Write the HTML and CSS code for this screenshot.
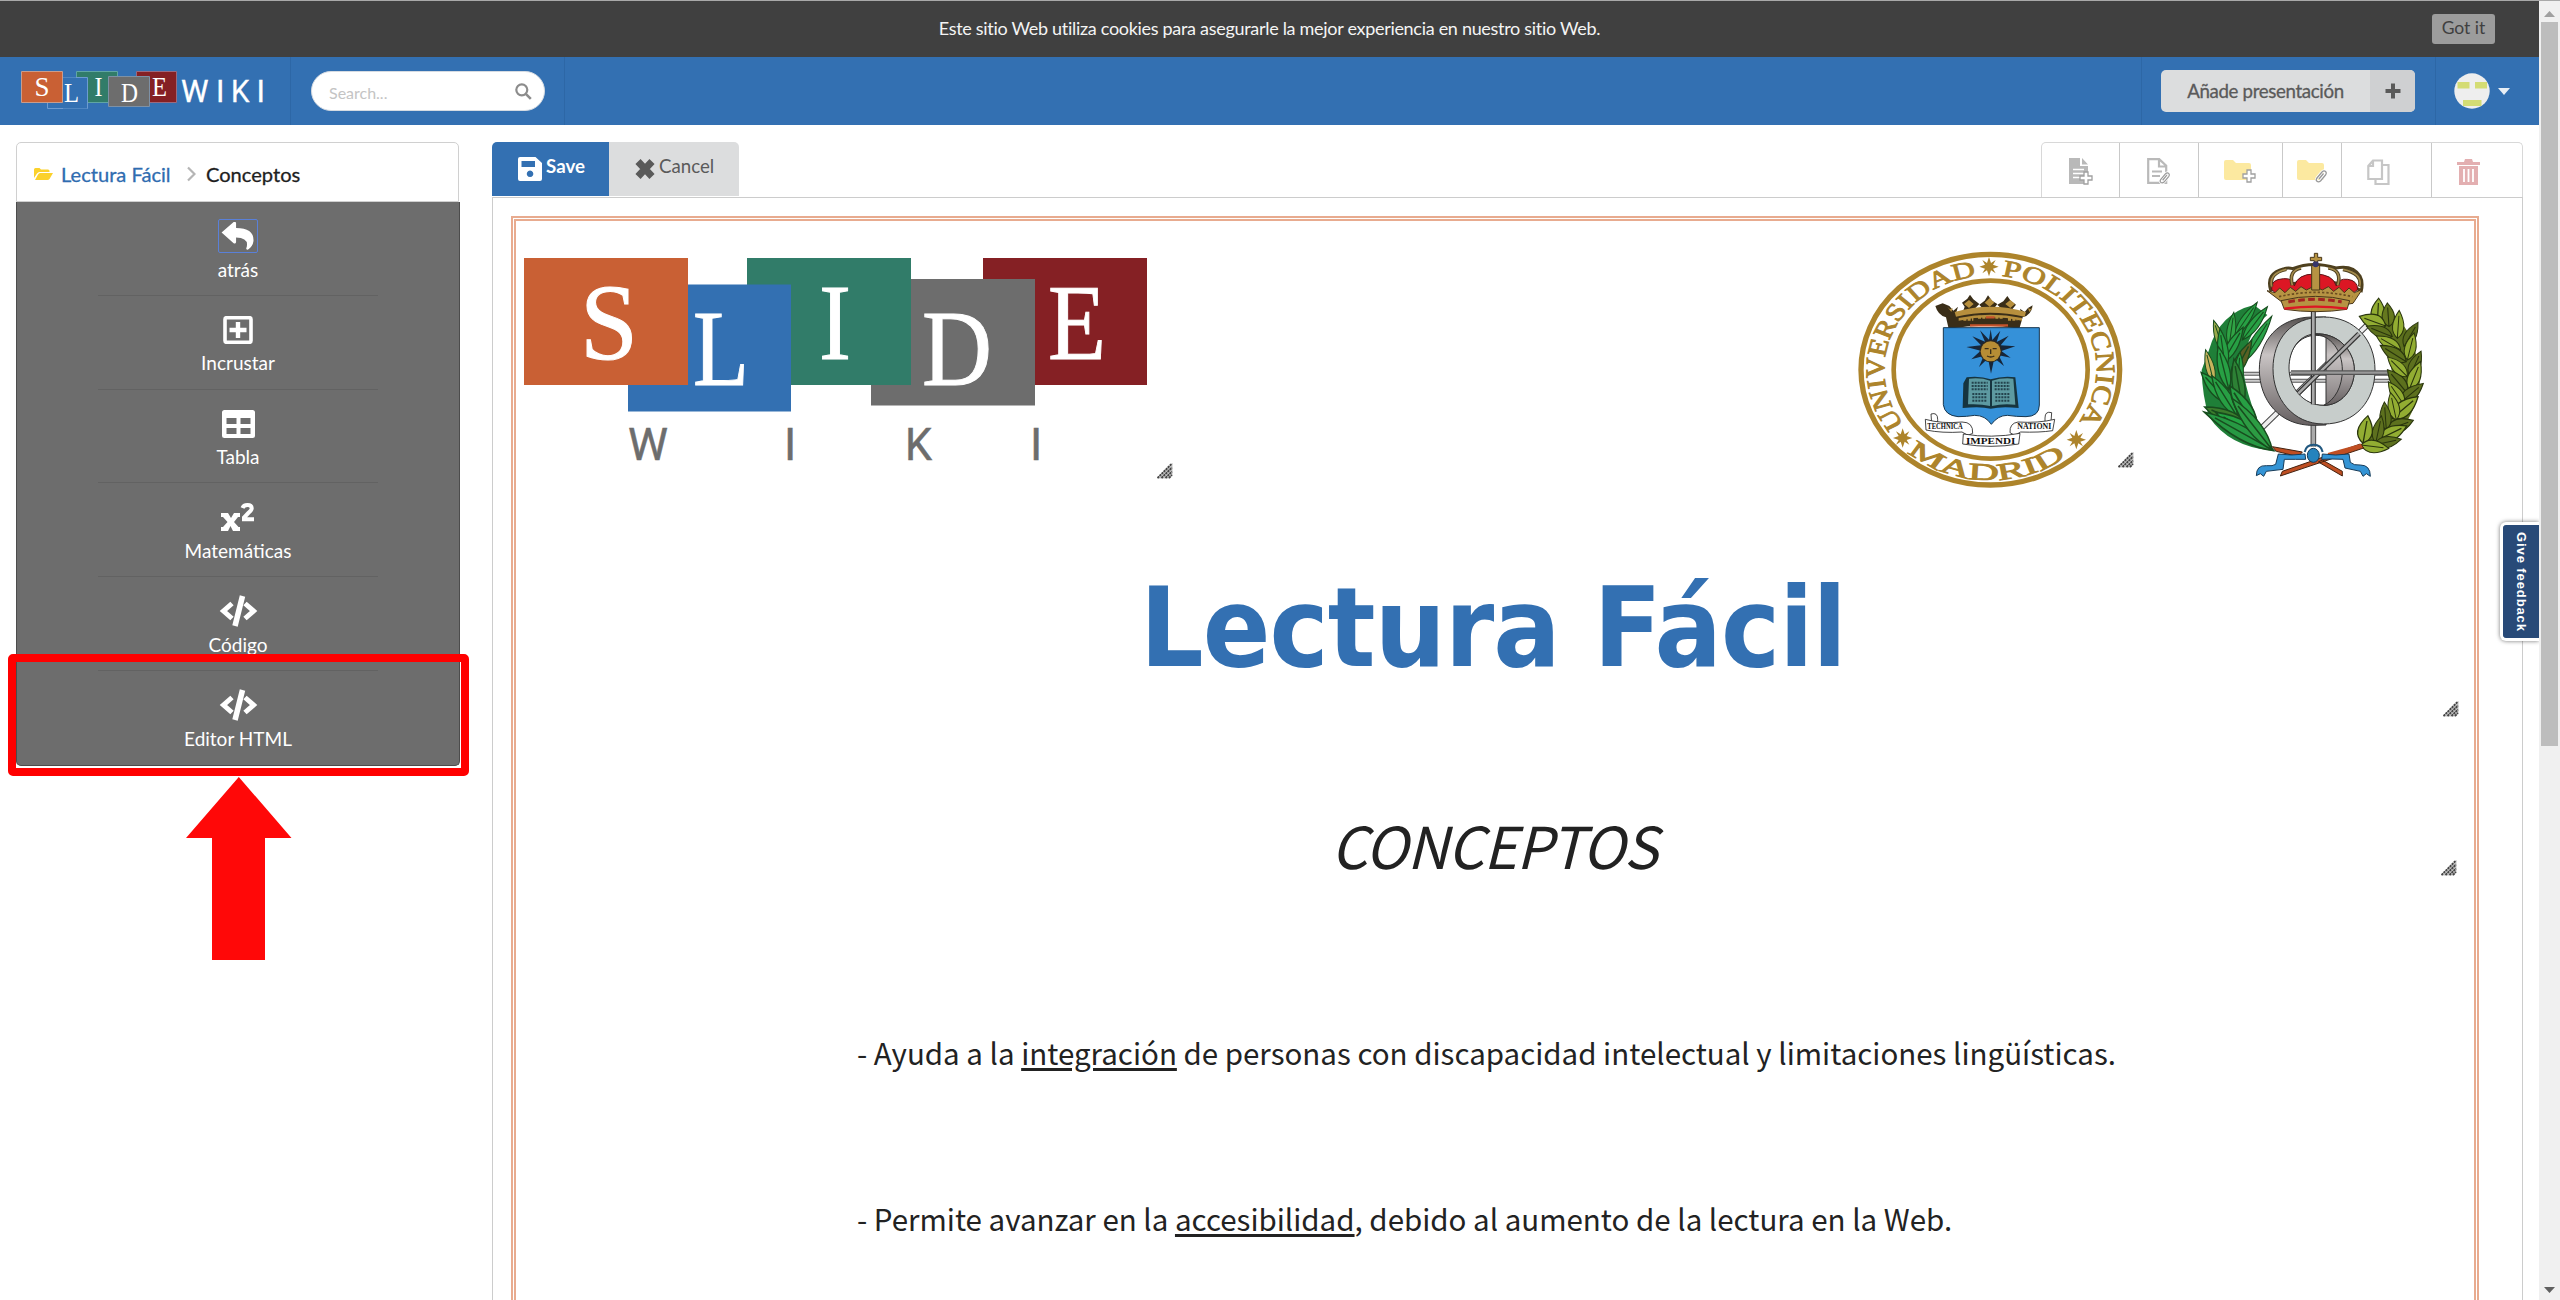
FILE: index.html
```html
<!DOCTYPE html>
<html lang="es">
<head>
<meta charset="utf-8">
<title>SlideWiki - Lectura Fácil</title>
<link rel="stylesheet" href="styles.css">
</head>
<body>
<svg width="0" height="0" class="defs">
  <defs>
    <symbol id="grip" viewBox="0 0 16 16"><path d="M0 15.500 15.500 0V12L12 15.500Z" fill="#c4c4c4"/><path d="M.5 15 15 .5M4.500 15 15 4.500M8.500 15 15 8.500M12 15l3-3" stroke="#444" stroke-width="1.900" stroke-dasharray="2.200 .7"/></symbol>
    <symbol id="code" viewBox="0 0 41 32"><path d="M27 9l8.500 7.500L27 24M14 9l-8.500 7.500L14 24" transform="translate(0 -.5)" fill="none" stroke="#fff" stroke-width="5"/><path d="M24.500 1 17 31" stroke="#fff" stroke-width="5.500"/></symbol>
    <symbol id="clip" viewBox="0 0 12 14"><path d="M2 9l5-6q2-2 3.500-.5t0 3.500L5.500 12q-2 1.500-3.500.3T2 9M4 10l4.500-5.500" fill="none" stroke="#fff" stroke-width="3"/><path d="M2 9l5-6q2-2 3.500-.5t0 3.500L5.500 12q-2 1.500-3.500.3T2 9M4 10l4.500-5.500" fill="none" stroke="#999" stroke-width="1.300"/></symbol>
    <symbol id="plus" viewBox="0 0 14 14"><path d="M5 1h4v4h4v4H9v4H5V9H1V5h4z" fill="#fff" stroke="#a0a0a0" stroke-width="1.300"/></symbol>
  </defs>
</svg>
<div class="page">
  <div class="cookie">
    <span class="cookie-text">Este sitio Web utiliza cookies para asegurarle la mejor experiencia en nuestro sitio Web.</span>
    <button class="cookie-btn">Got it</button>
  </div>
  <header class="nav">
    <div class="nav-logo">
      <svg width="248" height="40" viewBox="20 70 248 40" font-family="Liberation Serif, serif" fill="#fff">
        <g stroke="#9bb0cc" stroke-width="1">
          <path d="M47.500 77.500h40v31h-40z" fill="#3370b2" stroke="#6d9bd0"/>
          <path d="M76.500 71.500h41v31h-41z" fill="#317c69" stroke="#60a5a4"/>
          <path d="M136.500 71.500h40v31h-40z" fill="#852024" stroke="#9a6a80"/>
          <path d="M108.500 76.500h41v30h-41z" fill="#6d6d6d" stroke="#7d91a6"/>
          <path d="M63 77.500h24.500v31H63z" fill="#3370b2" stroke="none"/>
          <path d="M76 77.500h11.500v31" fill="none" stroke="#6d9bd0"/>
          <path d="M21.500 71.500h41v31h-41z" fill="#c96034" stroke="#c99c8c"/>
        </g>
        <g font-size="27"><text x="34.500" y="96">S</text><text x="64" y="102" textLength="15" lengthAdjust="spacingAndGlyphs">L</text><text x="94.500" y="96" textLength="8" lengthAdjust="spacingAndGlyphs">I</text><text x="121" y="102" textLength="17" lengthAdjust="spacingAndGlyphs">D</text><text x="152" y="96" textLength="15" lengthAdjust="spacingAndGlyphs">E</text></g>
        <g font-size="31" font-family="Roboto, sans-serif" font-weight="400" stroke="#fff" stroke-width=".3"><text x="181" y="101.700">W</text><text x="216" y="101.700">I</text><text x="231" y="101.700" textLength="18.500" lengthAdjust="spacingAndGlyphs">K</text><text x="256.500" y="101.700">I</text></g>
      </svg>
    </div>
    <div class="nav-search">
      <div class="search"><span>Search...</span>
        <svg width="17" height="17" viewBox="0 0 17 17" fill="none" stroke="#8c8c8c"><circle cx="6.800" cy="6.800" r="5.500" stroke-width="2.200"/><path d="M10.800 10.800l5 5" stroke-width="2.600"/></svg>
      </div>
    </div>
    <div class="nav-space"></div>
    <div class="nav-add"><div class="add"><span class="add-label">Añade presentación</span><span class="add-icon"><svg width="16" height="16" viewBox="0 0 16 16"><path d="M6 .500h4V6h5.500v4H10v5.500H6V10H.5V6H6z" fill="#5a5a5a"/></svg></span></div></div>
    <div class="nav-user">
      <svg width="36" height="36" viewBox="0 0 36 36"><circle cx="18" cy="18" r="17.700" fill="#eee"/><path d="M3.500 9h12v6.500h-12zM21 9h12v6.500H21zM9 27h18.500v6H9z" fill="#d4dc74"/></svg>
      <svg width="12" height="7" viewBox="0 0 12 7"><path d="M0 0h12L6 7z" fill="#e8eef5"/></svg>
    </div>
  </header>
  <div class="main">
    <aside class="side">
      <div class="crumbs">
        <svg width="19" height="12" viewBox="0 0 19 12"><path d="M0 10V1.500Q0 0 1.500 0h4L7 1.500h7q1.500 0 1.500 1.500v1H5.500Q4 4 3 5.500z" fill="#fbd12b"/><path d="M1 12 4 6.500Q4.800 5 6 5h13l-3.500 6q-.6 1-2 1z" fill="#fbd12b"/></svg>
        <a class="crumb-link">Lectura Fácil</a>
        <svg class="crumb-arrow" width="9" height="16" viewBox="0 0 9 16"><path d="M1 1.500 7.500 8 1 14.500" fill="none" stroke="#b5b5b5" stroke-width="2.200"/></svg>
        <span class="crumb-here">Conceptos</span>
      </div>
      <nav class="menu">
        <a class="item"><span class="focus"><svg width="34" height="29" viewBox="0 0 34 29"><path d="M0 11 12.500 0q2-.8 2.500 1v5.300Q34 6.500 33 20q-.6 5-5.500 8.500-2 .5-2-1Q29.500 16.500 15 16v5q-.5 2-2.500 1z" fill="#fff"/></svg></span><span class="label">atrás</span></a>
        <a class="item"><svg width="30" height="28" viewBox="0 0 30 28"><rect x="2" y="1.700" width="26" height="24.600" rx="1.500" fill="none" stroke="#fff" stroke-width="3.600"/><path d="M15 6v16M6.500 14h17" stroke="#fff" stroke-width="4.400"/></svg><span class="label">Incrustar</span></a>
        <a class="item"><svg width="33" height="28" viewBox="0 0 33 28"><path fill-rule="evenodd" d="M2.500 0h28Q33 0 33 2.500v23q0 2.500-2.500 2.500h-28Q0 28 0 25.500v-23Q0 0 2.500 0zM4.500 8v6h10V8zm14 0v6h10V8zm-14 10v6h10v-6zm14 0v6h10v-6z" fill="#fff"/></svg><span class="label">Tabla</span></a>
        <a class="item"><svg width="34" height="28" viewBox="0 0 34 28"><path d="M0 10h7l3 5 3-5h6v4h-2l-4 5 4.500 5H19v4h-7l-2.500-5L7 28H0v-4h2l4.500-5L2 14H0z" fill="#fff"/><path d="M21.500 5Q22.500 2 26.500 2q4 0 4.200 3.200 0 2-3.200 4.600L23 14.500V16.300h10" fill="none" stroke="#fff" stroke-width="4"/></svg><span class="label">Matemáticas</span></a>
        <a class="item"><svg width="41" height="32" class="tall"><use href="#code"/></svg><span class="label">Código</span></a>
        <a class="item"><svg width="41" height="32" class="tall"><use href="#code"/></svg><span class="label">Editor HTML</span></a>
      </nav>
    </aside>
    <section class="editor">
      <div class="bar">
        <div class="actions">
          <button class="save"><svg width="24" height="24" viewBox="0 0 24 24"><path fill-rule="evenodd" d="M2 0h15.500L24 6v16q0 2-2 2H2q-2 0-2-2V2Q0 0 2 0zm1.500 4v6H17V4zM12 13.500a3.300 3.300 0 1 0 .1 0z" fill="#fff"/></svg><span>Save</span></button>
          <button class="cancel"><svg width="20" height="20" viewBox="0 0 20 20"><path d="M3 2.500 17 17.500M17 2.500 3 17.500" stroke="#5a5a5a" stroke-width="7"/></svg><span>Cancel</span></button>
        </div>
        <div class="tools">
          <div class="tool t1"><svg width="26" height="28" viewBox="0 0 26 28"><path d="M0 0h11v8h8v18H0zM13 0l6 6.500h-6z" fill="#b9b9b9"/><path d="M4 11.500h11M4 15.500h11M4 19.500h8" stroke="#fff" stroke-width="1.500"/><use href="#plus" x="10" y="13" width="14" height="14"/></svg></div>
          <div class="tool t2"><svg width="26" height="28" viewBox="0 0 26 28"><path d="M1.200 1.200h11l7 6.500v17.100h-18zM12 1v7.500h7M5 13.500h10M5 18h8" fill="none" stroke="#b9b9b9" stroke-width="2.200"/><use href="#clip" x="12" y="13" width="11" height="13"/></svg></div>
          <div class="tool t3"><svg width="34" height="26" viewBox="0 0 34 26"><path d="M0 2q0-2 2-2h7l3 3h13q2 0 2 2v15H2q-2 0-2-2z" fill="#fce9a0"/><use href="#plus" x="18" y="9" width="14" height="14"/></svg></div>
          <div class="tool t4"><svg width="34" height="26" viewBox="0 0 34 26"><path d="M0 2q0-2 2-2h7l3 3h13q2 0 2 2v15H2q-2 0-2-2z" fill="#fce9a0"/><use href="#clip" x="18" y="9" width="12" height="14"/></svg></div>
          <div class="tool t5"><svg width="24" height="27" viewBox="0 0 24 27"><path d="M6 1.500h9V20H1.300V7zM6 1.500V7H1.300" fill="none" stroke="#c6c6c6" stroke-width="2.200"/><path d="M15 6h6.500v19H8.500v-5" fill="none" stroke="#c6c6c6" stroke-width="2.200"/></svg></div>
          <div class="tool t6"><svg width="24" height="27" viewBox="0 0 24 27"><path d="M0 3h7l1-3h7l1 3h7v3H0zM2 7h19v19H2z" fill="#e3afb1"/><path d="M7 10v13M11.500 10v13M16 10v13" stroke="#fff" stroke-width="1.800"/></svg></div>
        </div>
      </div>
      <div class="stage">
        <div class="slide">
          <svg class="obj logo" width="640" height="220" viewBox="516 250 640 220" fill="#fff" font-family="Liberation Serif, serif" font-size="108">
            <path d="M747 258h164v127H747z" fill="#317c69"/><path d="M983 258h164v127H983z" fill="#852024"/>
            <path d="M628 284.500h163v127H628z" fill="#3370b2"/><path d="M911 279h124v126.500H871V385h40z" fill="#6d6d6d"/><path d="M524 258h164v127H524z" fill="#c96034"/>
            <g stroke="#fff" stroke-width="1">
            <text x="580" y="359" textLength="58" lengthAdjust="spacingAndGlyphs">S</text>
            <text x="693" y="385" textLength="56" lengthAdjust="spacingAndGlyphs">L</text>
            <text x="819" y="358.500" textLength="32" lengthAdjust="spacingAndGlyphs">I</text>
            <text x="922" y="385" textLength="70" lengthAdjust="spacingAndGlyphs">D</text>
            <text x="1048" y="358.500" textLength="58" lengthAdjust="spacingAndGlyphs">E</text>
            </g>
            <g font-family="Roboto, sans-serif" font-size="45" font-weight="400" fill="#6d6d6d" stroke="#6d6d6d" stroke-width=".5"><text x="628" y="460">W</text><text x="784" y="460">I</text><text x="905" y="460" textLength="27" lengthAdjust="spacingAndGlyphs">K</text><text x="1030" y="460">I</text></g>
          </svg>

          <svg class="obj seal" width="360" height="280" viewBox="0 0 1080 840">
            <defs>
              <path id="ringA" d="M-228 166A282 282 0 0 1-34-280"/>
              <path id="ringB" d="M29.500-280.500A282 282 0 0 1 234 158"/>
              <path id="ringC" d="M-221 246A331 331 0 0 0 204 261"/>
              <path id="star" d="M0-29 6-11 20-20 12-6 29 0 12 6 20 20 6 11 0 29-6 11-20 20-12 6-29 0-12-6-20-20-6-11Z"/>
            </defs>
            <ellipse cx="511" cy="419" rx="388" ry="346" fill="none" stroke="#ad842b" stroke-width="16"/>
            <ellipse cx="512" cy="419" rx="291" ry="267" fill="none" stroke="#ad842b" stroke-width="14"/>
            <g transform="translate(511 419) scale(1.128 1)" fill="#ad842b" font-family="Liberation Serif, serif" font-size="71" stroke="#ad842b" stroke-width="2.500">
              <text><textPath href="#ringA" textLength="584" lengthAdjust="spacingAndGlyphs">UNIVERSIDAD</textPath></text>
              <text><textPath href="#ringB" textLength="578" lengthAdjust="spacingAndGlyphs">POLITECNICA</textPath></text>
              <text><textPath href="#ringC" textLength="458" lengthAdjust="spacingAndGlyphs">MADRID</textPath></text>
            </g>
            <g fill="#ad842b"><use href="#star" x="507" y="110"/><use href="#star" x="248" y="624"/><use href="#star" x="769" y="629"/></g>
            <path d="M368 220l20 8 12 14 14-12-6 20q20 4 26-20l-8-12 16-12 8-12 10 14 18 14-14 14q10 16 26 2l-12-14 16-12 10-16 12 16 16 10-12 16q14 14 26 0l-14-14 18-10 12-16 10 14 16 12-10 12q6 24 26 18l-4-18 14 10 10-12 14-8q-4 30-30 36l-10 34q-100-18-212 0l-8-34q-24-6-32-34z" fill="#3a2e18"/>
            <path d="M404 246q108-32 214 0l-4 14q-104-24-206 0zM382 230l8 8 8-4-4 12zM640 230l-8 8-8-4 4 12zM432 222l15-12 14 12-14 12zM494 218l15-14 14 14-14 12zM556 222l15-12 14 12-14 12z" fill="#b78f3d"/>
            <path d="M416 264q96-20 190 0v8q-94-20-190 0z" fill="#b78f3d"/><path d="M430 268h30M474 262h22M526 262h22M564 268h28" stroke="#b78f3d" stroke-width="9" stroke-dasharray="9 4"/><path d="M498 262h26M450 286h114" stroke="#c5532b" stroke-width="7"/>
            <path d="M370 293h288v232q0 34-40 35-30 0-56-4-28 0-48 27-18-27-50-27-24 4-50 4-40-4-44-36z" fill="#3591d9" stroke="#17364f" stroke-width="3"/>
            <path d="M512 298l5 32 24-28-11 34 36-19-24 29 44 3-42 14 28 20-36-7 16 32-29-23-10 46-9-46-27 26 14-33-37 10 28-26-43-11 44-5-26-27 38 16-15-34 27 28z" fill="#16263a"/>
            <circle cx="512" cy="364" r="33" fill="#2d281f"/><circle cx="512" cy="364" r="30" fill="#b68d35"/><path d="M494 356h12M518 356h12M512 358v14M501 378q11 6 22 0" stroke="#3a2e18" stroke-width="4" fill="none"/>
            <path d="M440 442q40-5 72 6 36-11 74-6l10 92q-50-6-84 2-30-8-84-2l2-74z" fill="#16343f"/><path d="M447 446q36-4 63 6v76q-28-7-66-5zM516 452q32-10 64-6l6 78q-40-4-70 4z" fill="#5d9aa1"/>
            <path d="M455 458h48M455 468h48M455 478h48M457 492h44M457 502h44M457 512h44M524 458h46M524 468h46M524 478h46M526 492h44M526 502h44M526 512h44" stroke="#23434d" stroke-width="6" stroke-dasharray="6 3"/>
            <g fill="#fff" stroke="#222" stroke-width="2.500"><path d="M333 552q20-6 20 16v12h-18zM695 548q-20-6-20 16v12h18z"/><path d="M316 568q50 14 110 8 34 0 32 34l-14 6-18-10q-60 4-108-6zM704 568q-50 12-110 8-26 4-24 32l14 8 18-10q56 2 96-4z"/><path d="M430 612q84 14 170-2l-4 32q-82 14-168 0z"/></g>
            <g font-family="Liberation Serif, serif" font-weight="bold" fill="#111"><text x="322" y="598" font-size="24" textLength="106" lengthAdjust="spacingAndGlyphs">TECHNICA</text><text x="438" y="642" font-size="26" textLength="148" lengthAdjust="spacingAndGlyphs">IMPENDI</text><text x="592" y="598" font-size="24" textLength="102" lengthAdjust="spacingAndGlyphs">NATIONI</text></g>
          </svg>

          <svg class="obj crest" width="300" height="260" viewBox="60 30 900 780">
            <defs>
              <path id="blade" d="M0 0Q-26-42 0-104 26-42 0 0ZM0 0V-88"/>
              <path id="leaf" d="M0 0Q-34-28 0-84 34-28 0 0ZM0 0V-68"/>
              <linearGradient id="metal" x1="0" x2="0" y1="0" y2="1"><stop offset="0" stop-color="#55504f"/><stop offset=".35" stop-color="#c9c4c4"/><stop offset="1" stop-color="#655f60"/></linearGradient>
            </defs>
            <path d="M250 431h440M250 452h440" stroke="#555" stroke-width="12"/><path d="M250 431h440M250 452h440" stroke="#ccc" stroke-width="6"/>
            <path d="M310 592 626 284" stroke="#444" stroke-width="18"/><path d="M310 592 626 284" stroke="#eee" stroke-width="12"/>
            <path d="M463 560v90" stroke="#555" stroke-width="17"/><path d="M463 560v90" stroke="#aaa" stroke-width="10"/>
            <path fill-rule="evenodd" d="M460 261C355 262 301 336 301 418c0 92 60 170 164 168l36-1V261zM470 316c60 0 82 50 82 106 0 50-26 96-50 104h-20c-60-6-94-58-94-110 0-58 34-100 82-100z" fill="url(#metal)" stroke="#333" stroke-width="3"/>
            <path fill-rule="evenodd" d="M494 261c-100 0-152 70-152 155 0 90 60 166 152 166 96 0 154-70 154-162 0-90-60-159-154-159zM466 312c70-6 120 50 120 108 0 60-40 106-92 106-60 0-104-52-104-112 0-50 26-98 76-102z" fill="#c7cdcb" stroke="#333" stroke-width="3"/>
            <path d="M466 312c50 4 84 50 84 108 0 50-22 90-56 106 50 0 92-44 92-106 0-58-50-114-120-108z" fill="url(#metal)" stroke="#333" stroke-width="3"/>
            <path d="M463 238v285" stroke="#333" stroke-width="15"/><path d="M463 238v285" stroke="#aaa" stroke-width="8"/>
            <path d="M418 490 600 311" stroke="#333" stroke-width="15"/><path d="M418 490 600 311" stroke="#aaa" stroke-width="8"/>
            <path d="M396 428h290" stroke="#555" stroke-width="14"/><path d="M396 428h290" stroke="#999" stroke-width="7"/>
            <path d="M285 225Q180 250 150 360L128 420Q130 500 150 560 210 650 340 662 262 520 250 400 270 300 325 255z" fill="#1f7f38"/>
            <g stroke="#184c1e" stroke-width="3" fill="#27a044">
              <use href="#blade" transform="translate(225 320) rotate(34) scale(1 1.200)"/><use href="#blade" transform="translate(250 330) rotate(37) scale(1.100 1.200)"/><use href="#blade" transform="translate(250 400) rotate(32) scale(1.100 1.600)" fill="#2aa249"/>
              <use href="#blade" transform="translate(210 350) rotate(8)" fill="#30a345"/><use href="#blade" transform="translate(196 370) rotate(-18)" fill="#9aa94a"/><use href="#blade" transform="translate(190 400) rotate(30) scale(1.200)"/>
              <use href="#blade" transform="translate(200 420) rotate(-8) scale(1.200)"/><use href="#blade" transform="translate(215 450) rotate(28) scale(1.300)" fill="#5a5f24"/><use href="#blade" transform="translate(165 460) rotate(-14)" fill="#c7b35c"/>
              <use href="#blade" transform="translate(210 480) rotate(-14) scale(1.300)"/><use href="#blade" transform="translate(235 480) rotate(4) scale(1.100)"/><use href="#blade" transform="translate(210 520) rotate(-42) scale(1.400 1.200)"/>
              <use href="#blade" transform="translate(250 530) rotate(-10) scale(1.400)" fill="#2d8135"/><use href="#blade" transform="translate(235 560) rotate(-32) scale(1.400)"/><use href="#blade" transform="translate(270 590) rotate(-66) scale(1.500 1.400)" fill="#3c7c2c"/>
              <use href="#blade" transform="translate(295 600) rotate(-32) scale(1.700 1.500)"/><use href="#blade" transform="translate(320 640) rotate(-58) scale(1.800 1.700)" fill="#24a443"/><use href="#blade" transform="translate(345 662) rotate(-61) scale(1.500 2.300)" fill="#279943"/><use href="#blade" transform="translate(340 660) rotate(-38) scale(1.500 1.900)" fill="#2c9c43"/>
            </g>
            <path d="M655 240Q740 260 765 350L785 430Q780 520 740 580 700 650 612 645 640 590 680 560 710 500 695 400 690 320 625 270z" fill="#5c701d"/>
            <g stroke="#29350d" stroke-width="3" fill="#92ad32">
              <use href="#leaf" transform="translate(655 280) rotate(3) scale(1.200 .9)"/><use href="#leaf" transform="translate(690 290) rotate(-4) scale(1.100 .85)" fill="#65781e"/><use href="#leaf" transform="translate(680 288) rotate(-70) scale(1.300 1)"/><use href="#leaf" transform="translate(715 325) rotate(4)"/>
              <use href="#leaf" transform="translate(700 320) rotate(-68)" fill="#5c701d"/><use href="#leaf" transform="translate(735 350) rotate(30)" fill="#586b1c"/><use href="#leaf" transform="translate(725 360) rotate(-60)"/><use href="#leaf" transform="translate(745 390) rotate(14)"/>
              <use href="#leaf" transform="translate(742 395) rotate(-58) scale(1.100)" fill="#5c701d"/><use href="#leaf" transform="translate(752 440) rotate(24)" fill="#5d701e"/><use href="#leaf" transform="translate(745 440) rotate(-45)"/><use href="#leaf" transform="translate(750 480) rotate(22) scale(1.100)"/>
              <use href="#leaf" transform="translate(745 490) rotate(-40) scale(1.200 1.100)" fill="#5c701d"/><use href="#leaf" transform="translate(722 520) rotate(50) scale(1.100)" fill="#5d701e"/><use href="#leaf" transform="translate(735 525) rotate(-34)"/><use href="#leaf" transform="translate(700 565) rotate(50) scale(1.300 1.200)"/>
              <use href="#leaf" transform="translate(712 570) rotate(-12)"/><use href="#leaf" transform="translate(684 600) rotate(70) scale(1.200 1)" fill="#5d701e"/><use href="#leaf" transform="translate(682 600) rotate(-4)" fill="#5c701d"/><use href="#leaf" transform="translate(660 628) rotate(64) scale(1.200 1.100)"/>
              <use href="#leaf" transform="translate(650 640) rotate(12)" fill="#5d701e"/><use href="#leaf" transform="translate(645 645) rotate(78)" fill="#5d701e"/><use href="#leaf" transform="translate(612 640) rotate(10) scale(1.300 1)"/><use href="#leaf" transform="translate(606 645) rotate(97) scale(1.100 1)"/>
            </g>
            <path d="M340 650l90 16-12 14-66-16zM604 642l10 12-250 84 6-14zM490 690l60 34v14l-72-42z" fill="#bf4e22" stroke="#44220f" stroke-width="3"/><path d="M606 641l-100 28 4 12 100-30z" fill="#bf4e22"/>
            <path d="M358 672q40 6 80 0l2 16q-30 0-64 0l-4 30-50 6-8 15-10-8-12 6q0-32 30-30 20 2 28-4zM570 672q-40 6-80 0l-2 16q30-2 64 0l6 26 46 10 8 15 10-8 12 8q0-34-30-34-20 2-30-8z" fill="#3494d5" stroke="#173b58" stroke-width="3"/>
            <path d="M437 666q4-22 27-22t27 22" fill="none" stroke="#20577f" stroke-width="6"/><ellipse cx="463" cy="676" rx="18" ry="21" fill="#2583bd" stroke="#173b58" stroke-width="3"/>
            <path d="M335 180q-16-50 40-64 14-4 26 0 60-24 130-2 50-10 72 24 10 18 4 44-60-30-136-24-70-6-136 22z" fill="#fff" stroke="#4e401f" stroke-width="9"/>
            <path d="M338 178q-4-30 36-32 30-2 32 22 10-36 60-36 56 0 66 36 6-24 34-20 30 4 30 30l-14 12H350z" fill="#dc1724" stroke="#5d1518" stroke-width="3"/>
            <path d="M400 166q-12-44 26-52M536 166q14-46-28-52M338 170q-10-40 44-52M602 170q10-40-50-52" fill="none" stroke="#4e401f" stroke-width="11"/>
            <path d="M400 166q-12-44 26-52M536 166q14-46-28-52M338 170q-10-40 44-52M602 170q10-40-50-52" fill="none" stroke="#a38a4c" stroke-width="5"/>
            <path d="M324 182l24 6 14-14 16 14 16-16 16 12 16-14 16 10 24-12 24 12 18-10 16 14 16-12 16 16 14-14 16 14 24-10-28 42q-102 22-208 0z" fill="#b69343" stroke="#493719" stroke-width="3"/>
            <path d="M366 212q104-26 206 0l-8 26q-92 14-188 0z" fill="#b69343" stroke="#493719" stroke-width="3"/><path d="M360 200q110-26 220 0" fill="none" stroke="#6b4d20" stroke-width="5" stroke-dasharray="7 6"/><path d="M388 216q80-16 160 0" fill="none" stroke="#a32322" stroke-width="9" stroke-dasharray="20 10"/><path d="M376 236q92-12 188 0" stroke="#dc1724" stroke-width="7" fill="none"/>
            <path d="M458 106h24v74h-24zM466 70h10v12h12v10h-12v14h-10V92h-12V82h12z" fill="#b69343" stroke="#493719" stroke-width="3"/><circle cx="470" cy="103" r="9" fill="#37366b"/>
          </svg>

          <h1 class="obj title">Lectura Fácil</h1>
          <p class="obj subtitle">CONCEPTOS</p>
          <p class="obj line l1">- Ayuda a la <u>integración</u> de personas con discapacidad intelectual y limitaciones lingüísticas.</p>
          <p class="obj line l2">- Permite avanzar en la <u>accesibilidad</u>, debido al aumento de la lectura en la Web.</p>
          <svg class="obj grip g1"><use href="#grip"/></svg>
          <svg class="obj grip g2"><use href="#grip"/></svg>
          <svg class="obj grip g3"><use href="#grip"/></svg>
          <svg class="obj grip g4"><use href="#grip"/></svg>
        </div>
      </div>
    </section>
  </div>
</div>
<div class="scroll">
  <svg width="11" height="6" viewBox="0 0 11 6"><path d="M5.500 0 11 6H0z" fill="#a0a0a0"/></svg>
  <div class="thumb"></div>
  <svg class="down" width="11" height="6" viewBox="0 0 11 6"><path d="M0 0h11L5.500 6z" fill="#606060"/></svg>
</div>
<div class="feedback"><span>Give feedback</span></div>
<div class="highlight"></div>
<svg class="arrow" width="106" height="183" viewBox="0 0 106 183"><path d="M52.800 0 105.500 61H79v122H26V61H0z" fill="#ff0808"/></svg>
</body>
</html>
```

FILE: styles.css
```css
* { box-sizing: border-box; }
body {
  margin: 0;
  width: 2560px;
  height: 1300px;
  overflow: hidden;
  display: flex;
  position: relative;
  background: #fff;
  font-family: Lato, sans-serif;
  font-size: 18.7px;
  color: #1e1e1e;
}
button { border: 0; margin: 0; padding: 0; font: inherit; }
svg { display: block; flex: none; }
.defs { position: absolute; }
.page { width: 2539px; height: 1300px; display: flex; flex-direction: column; }

/* cookie notice */
.cookie {
  height: 57px;
  flex: none;
  border-top: 1px solid #a9a9a9;
  background: #404040;
  color: #f4f4f4;
  display: flex;
  align-items: center;
  justify-content: flex-end;
  padding-right: 44px;
}
.cookie-text { flex: 1; text-align: center; font-size: 18px; letter-spacing: -.3px; line-height: 22px; padding: 0 0 2px 107px; }
.cookie-btn {
  width: 63px;
  height: 30px;
  border-radius: 3px;
  background: #9c9c9c;
  color: #404040;
  font-size: 17.5px;
  line-height: 28px;
  padding-bottom: 2px;
}

/* navigation bar */
.nav { height: 68px; flex: none; background: #3370b2; display: flex; }
.nav > div { display: flex; align-items: center; border-right: 1px solid #2d67a6; }
.nav .nav-logo { width: 291px; padding: 0 0 2px 20px; }
.nav .nav-search { width: 274px; padding-left: 20px; }
.nav .nav-space { flex: 1; }
.nav .nav-add { width: 294px; padding-left: 19px; }
.nav .nav-user { width: 103px; padding: 0 0 0 18px; gap: 8px; border-right: 0; }
.search {
  width: 234px;
  height: 40px;
  border: 1px solid #d5dbe2;
  border-radius: 20px;
  background: #fff;
  display: flex;
  align-items: center;
  justify-content: space-between;
  padding: 0 12px 0 17px;
  color: #c4c4c4;
  font-size: 16px;
}
.search span { padding-top: 2px; }
.add { width: 254px; height: 42px; border-radius: 5px; overflow: hidden; display: flex; background: #dcddde; color: #5a5a5a; }
.add-label { flex: 1; text-align: center; line-height: 42px; font-size: 18.7px; letter-spacing: -.35px; }
.add-label, .crumb-link, .crumb-here { -webkit-text-stroke: .3px currentColor; }
.add-icon { width: 45px; background: #cfd0d2; display: flex; align-items: center; justify-content: center; }

.main { flex: 1; display: flex; gap: 32px; padding: 17px 16px 0; }

/* sidebar */
.side { width: 444px; }
.crumbs {
  width: 443px;
  height: 60px;
  border: 1px solid #d0d0d0;
  border-radius: 5px 5px 0 0;
  display: flex;
  align-items: center;
  padding: 4px 0 0 17px;
  font-size: 20.1px;
  line-height: 24px;
}
.crumb-link { color: #2f6cb0; margin-left: 8px; width: 126px; }
.crumb-arrow { margin-right: 10px; }
.menu {
  height: 564px;
  background: #6d6d6d;
  border: 1px solid #4c4c4c;
  border-top: 0;
  border-radius: 0 0 5px 5px;
  display: flex;
  flex-direction: column;
  align-items: center;
}
.item {
  width: 280px;
  height: 93.9px;
  padding-top: 20px;
  display: flex;
  flex-direction: column;
  align-items: center;
  color: #fff;
  font-size: 19px;
  border-bottom: 1px solid #626262;
}
.item:last-child { border-bottom: 0; }
.item svg { height: 28px; }
.item svg.tall { height: 32px; margin: -2px 0; }
.focus { border: 1px solid #5a80d8; border-radius: 2px; padding: 2px; width: 40px; height: 34px; margin: -3px 0; }
.label { margin-top: 8.500px; line-height: 22px; }

/* editor */
.editor { flex: 1; max-width: 2031px; display: flex; flex-direction: column; }
.bar { height: 55px; flex: none; display: flex; justify-content: space-between; }
.actions { display: flex; height: 54px; }
.actions button { display: flex; padding: 15px 0 0 26px; line-height: 22px; }
.actions span { margin-top: -2px; }
.actions .save { width: 117px; background: #3370b2; color: #fff; font-weight: 700; border-radius: 5px 0 0 0; gap: 4px; }
.cancel { width: 130px; background: #dcddde; color: #5a5a5a; border-radius: 0 5px 0 0; gap: 4px; }
.cancel svg { margin-top: 2px; }
.tools { width: 482px; border: 1px solid #d8d8d8; border-bottom: 0; border-radius: 5px 5px 0 0; display: flex; }
.tool { border-right: 1px solid #c9c9c9; padding-top: 15px; }
.t1 { width: 78px; padding-left: 27px; }
.t2 { width: 79px; padding-left: 27px; }
.t3 { width: 84px; padding: 17px 0 0 25px; }
.t4 { width: 59px; padding: 17px 0 0 14px; }
.t5 { width: 90px; padding: 16px 0 0 25px; }
.t6 { width: 90px; padding: 16px 0 0 25px; border-right: 0; }
.stage { flex: 1; border: 1px solid #ccc; border-bottom: 0; padding: 18px 0 0 18px; }

/* slide canvas: every object is freely placed */
.slide { position: relative; width: 1968px; height: 1100px; border: 5px double #e8ab8f; }
.obj { position: absolute; margin: 0; white-space: nowrap; }
.logo { left: 0; top: 29px; }
.seal { left: 1304px; top: 9px; }
.crest { left: 1663px; top: 19px; }
.title { left: 624px; top: 342px; font: 700 111px/130px "DejaVu Sans Condensed", "DejaVu Sans", sans-serif; font-stretch: condensed; letter-spacing: -.9px; color: #3370b2; }
.subtitle { left: 815px; top: 585px; font: italic 400 57.5px/76px "Noto Sans CJK SC", sans-serif; letter-spacing: -.9px; color: #222; }
.line { left: 341px; font: 400 29.5px/40px "Noto Sans CJK SC", sans-serif; color: #222; }
.l1 { top: 811px; }
.l2 { top: 977px; }
.line u { text-decoration-thickness: 3px; text-underline-offset: 3px; }
.grip { width: 16px; height: 16px; }
.g1 { left: 641px; top: 242px; }
.g2 { left: 1602px; top: 231px; }
.g3 { left: 1927px; top: 480px; }
.g4 { left: 1925px; top: 639px; }

/* page scrollbar */
.scroll { width: 21px; background: #f0f0f0; display: flex; flex-direction: column; align-items: center; padding-top: 10px; border-top: 1px solid #a9a9a9; }
.scroll svg { margin: 0 0 5px; }
.thumb { width: 17px; height: 724px; background: #bdbdbd; }
.scroll svg.down { margin: auto 0 7px; }

.feedback {
  position: absolute;
  left: 2500px;
  top: 522px;
  width: 39px;
  height: 119px;
  border: 3px solid #fff;
  border-right: 0;
  border-radius: 6px 0 0 6px;
  background: #284a78;
  box-shadow: 0 0 4px rgba(0, 0, 0, .55);
  clip-path: inset(-6px 0 -6px -6px);
  display: flex;
  align-items: center;
  justify-content: center;
  color: #fff;
  font: 700 13px/36px "Liberation Sans", sans-serif;
  letter-spacing: .9px;
}
.feedback span { writing-mode: vertical-rl; line-height: 36px; }

/* tutorial mark-up over the page */
.highlight { position: absolute; left: 8px; top: 654px; width: 461px; height: 122px; border: 8px solid #f00; border-radius: 5px; }
.arrow { position: absolute; left: 186px; top: 777px; }
```
